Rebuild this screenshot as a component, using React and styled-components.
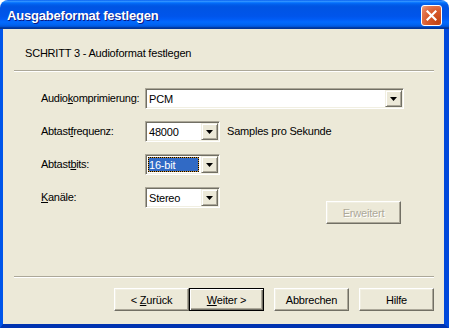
import styled, { createGlobalStyle } from "styled-components";

const GlobalStyle = createGlobalStyle`
    html, body {
        margin: 0;
        padding: 0;
        background: #ffffff;
    }
    body {
        font-family: "Liberation Sans", Arial, sans-serif;
        font-size: 11px;
        color: #000000;
    }
`

const DropArrow = () => (
    <svg width="7" height="4" viewBox="0 0 7 4">
        <polygon points="0,0 7,0 3.5,4" fill="#000" />
    </svg>
)

const CloseX = () => (
    <svg width="11" height="11" viewBox="0 0 11 11">
        <path d="M1.5 1.5 L9.5 9.5 M9.5 1.5 L1.5 9.5" stroke="#fff" strokeWidth="2.2" strokeLinecap="square" />
    </svg>
)

const ComboBox = ({ width, value, selected }) => (
    <Combo $width={width}>
        <ComboValue $selected={selected}>{value}</ComboValue>
        <DropButton><DropArrow /></DropButton>
    </Combo>
)

export default function App() {
    return (
        <>
            <GlobalStyle />
            <Window>
                <TitleBar>
                    <Title>Ausgabeformat festlegen</Title>
                    <CloseButton><CloseX /></CloseButton>
                </TitleBar>
                <Body>
                    <Header>SCHRITT 3 - Audioformat festlegen</Header>
                    <Rule />
                    <Form>
                        <Row>
                            <Label>Audio<u>k</u>omprimierung:</Label>
                            <ComboBox value="PCM" />
                        </Row>
                        <Row>
                            <Label>Abtast<u>f</u>requenz:</Label>
                            <ComboBox width={75} value="48000" />
                            <Note>Samples pro Sekunde</Note>
                        </Row>
                        <Row>
                            <Label>Abtast<u>b</u>its:</Label>
                            <ComboBox width={75} value="16-bit" selected />
                        </Row>
                        <Row>
                            <Label><u>K</u>anäle:</Label>
                            <ComboBox width={75} value="Stereo" />
                            <AdvancedButton disabled>Erweitert</AdvancedButton>
                        </Row>
                    </Form>
                    <Rule />
                    <ButtonRow>
                        <ButtonGroup>
                            <Button>&lt; <u>Z</u>urück</Button>
                            <Button $default><u>W</u>eiter &gt;</Button>
                        </ButtonGroup>
                        <Button>Abbrechen</Button>
                        <Button>Hilfe</Button>
                    </ButtonRow>
                </Body>
            </Window>
        </>
    )
}

const Window = styled.div`
    width: 449px;
    height: 328px;
    display: flex;
    flex-direction: column;
`

const TitleBar = styled.div`
    height: 29px;
    box-sizing: border-box;
    padding: 2px 7px 0 7px;
    display: flex;
    align-items: center;
    justify-content: space-between;
    border-radius: 8px 8px 0 0;
    background: linear-gradient(to bottom,
        #0058ee 0%, #3593ff 4%, #288eff 6%, #127dff 8%, #036ffc 10%,
        #0262ee 14%, #0057e5 20%, #0054e3 24%, #0055eb 56%, #005bf5 66%,
        #026afe 76%, #0062ef 86%, #0052d6 92%, #0040ab 94%, #003092 100%);
`

const Title = styled.span`
    color: #ffffff;
    font-weight: bold;
    font-size: 13px;
    letter-spacing: -0.2px;
    text-shadow: 1px 1px #0a1883;
`

const CloseButton = styled.div`
    width: 21px;
    height: 21px;
    box-sizing: border-box;
    border: 1px solid #ffffff;
    border-radius: 3px;
    display: flex;
    align-items: center;
    justify-content: center;
    background: radial-gradient(circle at 85% 85%, #c44412 0%, #d85a2c 50%, #e47a55 80%, #f0a689 100%);
`

const Body = styled.div`
    flex: 1;
    display: flex;
    flex-direction: column;
    background: #ece9d8;
    border-left: 3px solid #0055ea;
    border-right: 5px solid #0048db;
    border-bottom: 4px solid #0033b0;
`

const Header = styled.div`
    height: 41px;
    box-sizing: border-box;
    padding: 18px 0 0 22px;
    line-height: 13px;
    letter-spacing: -0.2px;
`

const Rule = styled.div`
    height: 2px;
    box-sizing: border-box;
    margin: 0 10px 0 11px;
    border-top: 1px solid #aca899;
    border-bottom: 1px solid #ffffff;
`

const Form = styled.div`
    flex: 1;
    display: flex;
    flex-direction: column;
    gap: 12px;
    padding: 16px 40px 0 38px;
`

const Row = styled.div`
    display: flex;
    align-items: flex-start;
    height: 21px;
`

const Label = styled.div`
    width: 104px;
    flex-shrink: 0;
    height: 21px;
    line-height: 21px;
    letter-spacing: -0.3px;
`

const Combo = styled.div`
    ${(p) => (p.$width ? `width: ${p.$width}px;` : "flex: 1;")}
    height: 21px;
    box-sizing: border-box;
    padding: 1px;
    display: flex;
    background: #ffffff;
    border: 1px solid;
    border-color: #aca899 #ffffff #ffffff #aca899;
    box-shadow: inset 1px 1px #716f64, inset -1px -1px #f1efe2;
`

const ComboValue = styled.div`
    flex: 1;
    margin: 1px 2px 1px 1px;
    padding-left: 1px;
    display: flex;
    align-items: center;
    box-sizing: border-box;
    letter-spacing: -0.2px;
    ${(p) => p.$selected && `
        background: #316ac5;
        color: #ffffff;
        border: 1px solid #ce953a;
        outline: 1px dotted #000000;
        outline-offset: -1px;
        padding-left: 0;
    `}
`

const DropButton = styled.div`
    width: 17px;
    height: 17px;
    box-sizing: border-box;
    display: flex;
    align-items: center;
    justify-content: center;
    background: #ece9d8;
    border: 1px solid;
    border-color: #f1efe2 #716f64 #716f64 #f1efe2;
    box-shadow: inset 1px 1px #ffffff, inset -1px -1px #aca899;
`

const Note = styled.div`
    margin-left: 7px;
    height: 21px;
    line-height: 21px;
    letter-spacing: -0.2px;
`

const Button = styled.button`
    width: 75px;
    height: 23px;
    box-sizing: border-box;
    margin: 0;
    padding: 0;
    font-family: "Liberation Sans", Arial, sans-serif;
    font-size: 11px;
    letter-spacing: -0.2px;
    color: #000000;
    background: #ece9d8;
    border: 1px solid;
    border-color: #ffffff #716f64 #716f64 #ffffff;
    box-shadow: inset -1px -1px #aca899, inset 1px 1px #f1efe2;
    ${(p) => p.$default && `
        border: 1px solid #000000;
        box-shadow: inset 1px 1px #ffffff, inset -1px -1px #716f64, inset -2px -2px #aca899;
    `}
    &:disabled {
        color: #aca899;
        text-shadow: 1px 1px #ffffff;
    }
`

const AdvancedButton = styled(Button)`
    margin: 14px 3px 0 auto;
`

const ButtonRow = styled.div`
    display: flex;
    justify-content: flex-end;
    gap: 10px;
    padding: 10px 10px 13px 0;
`

const ButtonGroup = styled.div`
    display: flex;
`
